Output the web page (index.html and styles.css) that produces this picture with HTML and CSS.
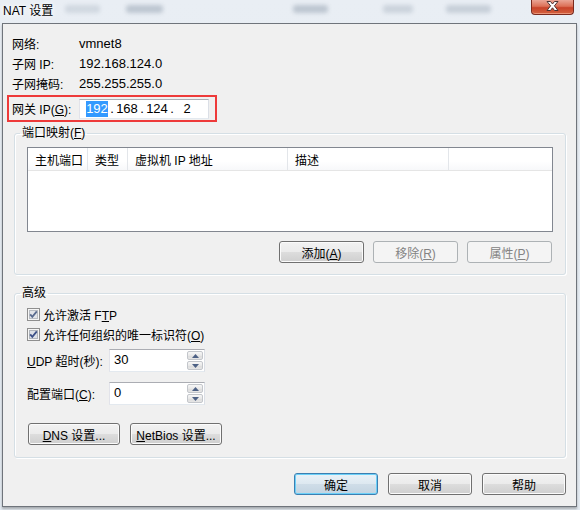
FILE: index.html
```html
<!DOCTYPE html>
<html lang="zh-CN">
<head>
<meta charset="utf-8">
<title>NAT 设置</title>
<link rel="stylesheet" href="styles.css">
</head>
<body>
<div class="window">
  <div class="titlebar">
    <span class="title">NAT 设置</span>
    <span class="blob b1"></span>
    <span class="blob b2"></span>
    <span class="blob b3"></span>
    <span class="blob b4"></span>
    <span class="blob b5"></span>
    <span class="close">
      <svg width="13" height="10" viewBox="0 0 13 10"><path d="M1 0.5 H4.5 L6.5 3 L8.5 0.5 H12 L8.4 4.8 L12 9.5 H8.5 L6.5 6.8 L4.5 9.5 H1 L4.6 4.8 Z" fill="#fff" stroke="#4b3434" stroke-width="1" stroke-linejoin="round"/></svg>
    </span>
  </div>
  <div class="client">
    <div class="info">
      <div class="row"><span class="lbl">网络:</span><span class="val">vmnet8</span></div>
      <div class="row"><span class="lbl">子网 IP:</span><span class="val">192.168.124.0</span></div>
      <div class="row"><span class="lbl">子网掩码:</span><span class="val">255.255.255.0</span></div>
    </div>
    <div class="gateway">
      <span class="lbl">网关 IP(<u>G</u>):</span>
      <div class="ipbox">
        <span class="oct"><span class="sel">192</span></span><span class="dot">.</span><span class="oct">168</span><span class="dot">.</span><span class="oct">124</span><span class="dot">.</span><span class="oct">2</span>
      </div>
    </div>

    <fieldset class="group">
      <legend>端口映射(<u>F</u>)</legend>
      <div class="gbody g1">
        <div class="table">
          <div class="thead">
            <div class="th c1">主机端口</div>
            <div class="th c2">类型</div>
            <div class="th c3">虚拟机 IP 地址</div>
            <div class="th c4">描述</div>
            <div class="th c5"></div>
          </div>
        </div>
        <div class="btnrow">
          <button class="btn">添加(<u>A</u>)</button>
          <button class="btn" disabled>移除(<u>R</u>)</button>
          <button class="btn" disabled>属性(<u>P</u>)</button>
        </div>
      </div>
    </fieldset>

    <fieldset class="group adv">
      <legend>高级</legend>
      <div class="gbody g2">
        <div class="chk">
          <svg class="box" width="13" height="13" viewBox="0 0 13 13"><rect x="0.5" y="0.5" width="12" height="12" fill="#f6f6f6" stroke="#8f8f8f"/><rect x="2.5" y="2.5" width="8" height="8" fill="#e3e5e9" stroke="#b9bdc3"/><path d="M3.2 6.3 L5.3 8.8 L9.8 3.4" fill="none" stroke="#5a6c8f" stroke-width="1.8"/></svg>
          <span>允许激活 F<u>T</u>P</span>
        </div>
        <div class="chk">
          <svg class="box" width="13" height="13" viewBox="0 0 13 13"><rect x="0.5" y="0.5" width="12" height="12" fill="#f6f6f6" stroke="#8f8f8f"/><rect x="2.5" y="2.5" width="8" height="8" fill="#dde1e7" stroke="#b0b5bc"/><path d="M3.2 6.3 L5.3 8.8 L9.8 3.4" fill="none" stroke="#3d5188" stroke-width="1.8"/></svg>
          <span>允许任何组织的唯一标识符(<u>O</u>)</span>
        </div>
        <div class="spinrow first">
          <span class="slbl"><u>U</u>DP 超时(秒):</span>
          <div class="spin">
            <span class="v">30</span>
            <span class="arrows">
              <span class="arr"><svg width="7" height="4" viewBox="0 0 7 4"><path d="M0 4 L3.5 0 L7 4 Z" fill="#4d6185"/></svg></span>
              <span class="arr"><svg width="7" height="4" viewBox="0 0 7 4"><path d="M0 0 L3.5 4 L7 0 Z" fill="#4d6185"/></svg></span>
            </span>
          </div>
        </div>
        <div class="spinrow">
          <span class="slbl">配置端口(<u>C</u>):</span>
          <div class="spin">
            <span class="v">0</span>
            <span class="arrows">
              <span class="arr"><svg width="7" height="4" viewBox="0 0 7 4"><path d="M0 4 L3.5 0 L7 4 Z" fill="#4d6185"/></svg></span>
              <span class="arr"><svg width="7" height="4" viewBox="0 0 7 4"><path d="M0 0 L3.5 4 L7 0 Z" fill="#4d6185"/></svg></span>
            </span>
          </div>
        </div>
        <div class="dnsrow">
          <button class="btn wide"><u>D</u>NS 设置...</button>
          <button class="btn wide"><u>N</u>etBios 设置...</button>
        </div>
      </div>
    </fieldset>

    <div class="footer">
      <button class="btn def">确定</button>
      <button class="btn">取消</button>
      <button class="btn">帮助</button>
    </div>
  </div>
</div>
</body>
</html>
```

FILE: styles.css
```css
html, body {
  margin: 0;
  padding: 0;
}
body {
  width: 580px;
  height: 510px;
  overflow: hidden;
  background: #e6ecf2;
  font-family: "Liberation Sans", "Noto Sans CJK SC", sans-serif;
  font-size: 12px;
  color: #000;
}
u { text-decoration: underline; text-underline-offset: 1px; }

.window {
  width: 580px;
  height: 510px;
  background: linear-gradient(#e9eef4, #e2e9f0);
}

/* title bar */
.titlebar {
  height: 23px;
  display: flex;
  align-items: flex-start;
}
.title {
  width: 57px;
  margin: 3px 0 0 3px;
  line-height: 16px;
  font-size: 12px;
  white-space: nowrap;
  text-shadow: 0 0 5px #fff, 0 0 8px #fff;
}
.blob {
  height: 8px;
  margin-top: 5px;
  background: #8896a6;
  opacity: 0.45;
  border-radius: 3px;
  filter: blur(2px);
}
.b1 { margin-left: 5px; width: 35px; opacity: 0.25; }
.b2 { margin-left: 26px; width: 37px; }
.b3 { margin-left: 130px; width: 35px; }
.b4 { margin-left: 55px; width: 30px; opacity: 0.3; }
.b5 { margin-left: 33px; width: 45px; opacity: 0.35; }
.close {
  margin-left: auto;
  margin-right: 6px;
  width: 43px;
  height: 15px;
  box-sizing: border-box;
  border: 1px solid #7a2a1e;
  border-top: none;
  border-radius: 0 0 4px 4px;
  background: linear-gradient(#eaa595, #dc7057 45%, #c8432a 55%, #d4623f);
  box-shadow: inset 0 -1px 0 rgba(255,200,180,0.5);
  display: flex;
  justify-content: center;
  align-items: flex-start;
  padding-top: 1px;
}

/* client area */
.client {
  margin-left: 2px;
  width: 575px;
  height: 484px;
  box-sizing: border-box;
  border: 1px solid #6f747b;
  background: #f0f0f0;
  box-shadow: 0 2px 2px rgba(60,60,60,0.35);
}
.info {
  padding: 9px 0 0 9px;
}
.row {
  display: flex;
  align-items: center;
  height: 20px;
}
.lbl {
  width: 67px;
  flex: none;
  white-space: nowrap;
}
.val {
  font-size: 13px;
}

.gateway {
  margin: 2px 0 0 4px;
  width: 210px;
  height: 27px;
  box-sizing: border-box;
  border: 2px solid #ee3a3a;
  display: flex;
  align-items: center;
  padding-left: 3px;
}
.ipbox {
  width: 130px;
  height: 20px;
  box-sizing: border-box;
  border: 1px solid #abadb3;
  border-color: #abadb3 #dbdfe6 #e3e9ef #e2e3ea;
  background: #fff;
  display: flex;
  align-items: center;
  padding-left: 6px;
  font-size: 13px;
}
.oct {
  width: 22px;
  text-align: center;
}
.dot {
  width: 8px;
  text-align: center;
}
.sel {
  display: inline-block;
  background: #3399ff;
  color: #fff;
  line-height: 16px;
}

/* group boxes */
.group {
  margin: 3px 0 0 11px;
  width: 552px;
  box-sizing: border-box;
  border: 1px solid #d5dfe5;
  border-radius: 3px;
  padding: 0;
  min-width: 0;
  box-shadow: inset 1px 1px 0 #fff, 1px 1px 0 #fff;
}
.group legend {
  margin-left: 5px;
  padding: 0 2px;
  line-height: 16px;
  font-size: 12px;
}
.adv {
  margin-top: 10px;
}
.gbody.g1 {
  padding: 6px 12px 11px;
}
.gbody.g2 {
  padding: 3px 12px 12px;
}

/* list view */
.table {
  height: 85px;
  box-sizing: border-box;
  border: 1px solid #828790;
  background: #fff;
}
.thead {
  display: flex;
  height: 23px;
  box-sizing: border-box;
  border-bottom: 1px solid #e5e5e5;
  background: linear-gradient(#ffffff, #ffffff 60%, #f7f8fa);
}
.th {
  box-sizing: border-box;
  padding: 5px 0 0 7px;
  line-height: 16px;
  border-right: 1px solid #e3e6ea;
  white-space: nowrap;
}
.c1 { width: 60px; }
.c2 { width: 40px; }
.c3 { width: 160px; }
.c4 { width: 161px; }
.c5 { flex: 1; border-right: none; }

/* buttons */
.btn {
  width: 85px;
  height: 22px;
  padding: 0;
  box-sizing: border-box;
  font-family: "Liberation Sans", "Noto Sans CJK SC", sans-serif;
  font-size: 12px;
  color: #000;
  border: 1px solid #707070;
  border-radius: 3px;
  background: linear-gradient(#f2f2f2 0%, #ebebeb 50%, #dddddd 51%, #cfcfcf 100%);
  box-shadow: inset 0 0 0 1px #fbfbfb;
}
.btn:disabled {
  border-color: #adb2b5;
  background: #f4f4f4;
  color: #838383;
  box-shadow: none;
}
.btnrow {
  margin: 9px 1px 0 0;
  display: flex;
  justify-content: flex-end;
  gap: 9px;
}

/* advanced */
.chk {
  display: flex;
  align-items: center;
  height: 20px;
}
.chk .box {
  margin-right: 3px;
  flex: none;
}
.spinrow {
  display: flex;
  align-items: center;
  margin-top: 10px;
}
.spinrow.first {
  margin-top: 5px;
}
.slbl {
  width: 82px;
  flex: none;
  white-space: nowrap;
}
.spin {
  width: 96px;
  height: 23px;
  box-sizing: border-box;
  border: 1px solid #abadb3;
  border-color: #abadb3 #dbdfe6 #e3e9ef #e2e3ea;
  background: #fff;
  display: flex;
}
.spin .v {
  flex: 1;
  padding-left: 4px;
  font-size: 13px;
  line-height: 20px;
}
.arrows {
  width: 16px;
  display: flex;
  flex-direction: column;
  padding: 1px 1px 1px 0;
  gap: 1px;
}
.arr {
  flex: 1;
  box-sizing: border-box;
  border: 1px solid #c3c6cb;
  border-radius: 2px;
  background: linear-gradient(#f7f7f7, #e8e8e8 50%, #dcdcdc 51%, #e6e6e6);
  display: flex;
  align-items: center;
  justify-content: center;
}
.dnsrow {
  margin: 18px 0 0 1px;
  display: flex;
  gap: 10px;
}
.btn.wide {
  width: 92px;
}

/* footer */
.footer {
  margin: 15px 10px 0 0;
  display: flex;
  justify-content: flex-end;
  gap: 10px;
}
.footer .btn {
  width: 84px;
}
.btn.def {
  border-color: #3c7fb1;
  background: linear-gradient(#eaf2f8 0%, #dde8f0 50%, #cfdde8 51%, #c3d4e1 100%);
  box-shadow: inset 0 0 0 1px #6cd0f8;
}
```
